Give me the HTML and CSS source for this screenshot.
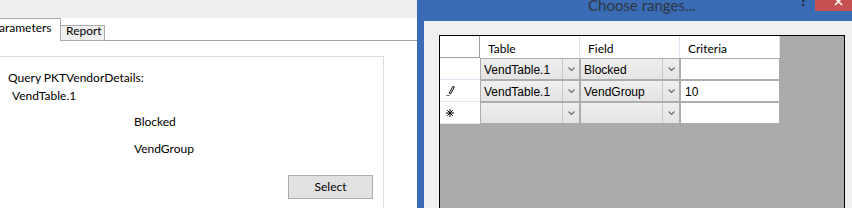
FILE: index.html
```html
<!DOCTYPE html>
<html>
<head>
<meta charset="utf-8">
<link rel="stylesheet" href="styles.css">
</head>
<body>
<div class="screen">
  <div class="left">
    <div class="topband"></div>
    <div class="tabstrip">
      <div class="tab tab-sel">Parameters</div>
      <div class="tab tab-off">Report</div>
      <div class="tabfill"></div>
    </div>
    <div class="page">
      <div class="group">
        <div class="q">Query PKTVendorDetails:</div>
        <div class="tbl">VendTable.1</div>
        <div class="fld fld-first">Blocked</div>
        <div class="fld">VendGroup</div>
        <div class="btnrow"><div class="btn">Select</div></div>
      </div>
    </div>
  </div>
  <div class="win">
    <div class="titlebar">
      <div class="title">Choose ranges...</div>
      <div class="help">?</div>
      <div class="close">
        <svg width="37" height="11" viewBox="0 0 37 11"><path d="M20 -2 L27 5 M27 -2 L20 5" stroke="#fff" stroke-width="1.6" fill="none"/></svg>
      </div>
    </div>
    <div class="client">
      <div class="grid">
        <div class="rows">
          <div class="corner"></div>
          <div class="hcell">Table</div>
          <div class="hcell">Field</div>
          <div class="hcell">Criteria</div>

          <div class="rh"></div>
          <div class="combo"><span class="txt">VendTable.1</span><span class="dd"><svg width="7" height="4" viewBox="0 0 7 4"><path d="M0.5 0.5 L3.5 3.5 L6.5 0.5" stroke="#707070" stroke-width="1.2" fill="none"/></svg></span></div>
          <div class="combo"><span class="txt">Blocked</span><span class="dd"><svg width="7" height="4" viewBox="0 0 7 4"><path d="M0.5 0.5 L3.5 3.5 L6.5 0.5" stroke="#707070" stroke-width="1.2" fill="none"/></svg></span></div>
          <div class="crit"></div>

          <div class="rh"><svg width="9" height="11" viewBox="0 0 9 11"><path d="M3.2 8.2 L7 1.2 L8.3 2 L4.5 9 Z" stroke="#000" stroke-width="0.9" fill="none"/><path d="M0.5 10.5 h1 M2.3 10.5 h1" stroke="#000" stroke-width="1"/></svg></div>
          <div class="combo"><span class="txt">VendTable.1</span><span class="dd"><svg width="7" height="4" viewBox="0 0 7 4"><path d="M0.5 0.5 L3.5 3.5 L6.5 0.5" stroke="#707070" stroke-width="1.2" fill="none"/></svg></span></div>
          <div class="combo"><span class="txt">VendGroup</span><span class="dd"><svg width="7" height="4" viewBox="0 0 7 4"><path d="M0.5 0.5 L3.5 3.5 L6.5 0.5" stroke="#707070" stroke-width="1.2" fill="none"/></svg></span></div>
          <div class="crit">10</div>

          <div class="rh"><svg width="8" height="8" viewBox="0 0 8 8"><path d="M4 0 V8 M0 4 H8 M1.2 1.2 L6.8 6.8 M6.8 1.2 L1.2 6.8" stroke="#000" stroke-width="1" fill="none"/></svg></div>
          <div class="combo"><span class="txt"></span><span class="dd"><svg width="7" height="4" viewBox="0 0 7 4"><path d="M0.5 0.5 L3.5 3.5 L6.5 0.5" stroke="#707070" stroke-width="1.2" fill="none"/></svg></span></div>
          <div class="combo"><span class="txt"></span><span class="dd"><svg width="7" height="4" viewBox="0 0 7 4"><path d="M0.5 0.5 L3.5 3.5 L6.5 0.5" stroke="#707070" stroke-width="1.2" fill="none"/></svg></span></div>
          <div class="crit"></div>
        </div>
      </div>
    </div>
  </div>
</div>
</body>
</html>
```
FILE: styles.css
```css
html, body {
  margin: 0;
  padding: 0;
}
body {
  width: 852px;
  height: 208px;
  overflow: hidden;
  background: #fff;
  color: #000;
  font-family: Lato, "Liberation Sans", sans-serif;
  font-size: 12px;
}
.screen {
  display: flex;
  height: 208px;
}
.left {
  width: 417px;
  flex: none;
  overflow: hidden;
  display: flex;
  flex-direction: column;
  background: #fff;
}
.topband {
  height: 18px;
  background: #eeeeee;
  flex: none;
}
.tabstrip {
  display: flex;
  align-items: flex-end;
  height: 23px;
  flex: none;
}
.tab {
  box-sizing: border-box;
  white-space: nowrap;
  flex: none;
}
.tab-sel {
  margin-left: -12px;
  width: 73px;
  height: 23px;
  border-top: 1px solid #acacac;
  border-right: 1px solid #acacac;
  background: #fff;
  padding: 1px 0 0 4px;
  line-height: 16px;
}
.tab-off {
  margin-left: -1px;
  width: 45px;
  height: 16px;
  border: 1px solid #acacac;
  background: #efefef;
  padding-left: 5px;
  line-height: 9px;
}
.tabfill {
  flex: 1;
  height: 23px;
  box-sizing: border-box;
  border-bottom: 1px solid #a0a0a0;
}
.page {
  flex: 1;
  padding-top: 15px;
  display: flex;
}
.group {
  width: 384px;
  box-sizing: border-box;
  border-top: 1px solid #dcdcdc;
  border-right: 1px solid #dcdcdc;
  padding-top: 13px;
  line-height: 16px;
}
.q {
  margin-left: 8px;
}
.tbl {
  margin-left: 12px;
  margin-top: 2px;
}
.fld {
  margin-left: 134px;
  margin-top: 11px;
}
.fld-first {
  margin-top: 10px;
}
.btnrow {
  margin-top: 18px;
  padding-left: 288px;
}
.btn {
  width: 85px;
  height: 24px;
  box-sizing: border-box;
  border: 1px solid #adadad;
  background: #e1e1e1;
  text-align: center;
  line-height: 21px;
}
.win {
  flex: 1;
  background: #3a6bb5;
  display: flex;
  flex-direction: column;
  padding-left: 7px;
  overflow: hidden;
}
.titlebar {
  height: 21px;
  flex: none;
  display: flex;
  align-items: flex-start;
  overflow: hidden;
}
.title {
  margin-left: 164px;
  margin-top: -2px;
  font-size: 15px;
  line-height: 15px;
  color: #2f3640;
  white-space: nowrap;
}
.help {
  margin-left: auto;
  margin-top: -7px;
  width: 6px;
  margin-right: 9px;
  font-size: 15px;
  line-height: 15px;
  font-weight: bold;
  color: #1f2530;
}
.close {
  width: 37px;
  height: 11px;
  background: #c75050;
  flex: none;
}
.close svg {
  display: block;
  overflow: visible;
}
.client {
  flex: 1;
  background: #f0f0f0;
  padding: 14px 0 0 15px;
  display: flex;
}
.grid {
  width: 406px;
  box-sizing: border-box;
  border: 1px solid #000;
  border-bottom: none;
  background: #ababab;
}
.rows {
  display: grid;
  grid-template-columns: 40px 100px 100px 100px;
  grid-auto-rows: 22px;
}
.corner {
  background: #fff;
  border-right: 1px solid #a0a0a0;
  border-bottom: 1px solid #a0a0a0;
  box-sizing: border-box;
}
.hcell {
  background: #fff;
  border-right: 1px solid #dde6f3;
  box-sizing: border-box;
  padding: 4px 0 0 8px;
  line-height: 18px;
}
.rh {
  background: #fff;
  border-bottom: 1px solid #dde6f3;
  box-sizing: border-box;
  display: flex;
  align-items: center;
  padding-left: 6px;
}
.combo {
  display: flex;
  box-sizing: border-box;
  border: 1px solid #adadad;
  background: linear-gradient(#efefef, #e4e4e4);
}
.combo .txt {
  flex: 1;
  padding: 2px 0 0 3px;
  font-family: "Liberation Sans", Arial, sans-serif;
  font-size: 12px;
  line-height: 18px;
  white-space: nowrap;
  overflow: hidden;
}
.combo .dd {
  width: 16px;
  flex: none;
  border-left: 1px solid #c8c8c8;
  display: flex;
  align-items: center;
  justify-content: center;
}
.combo .dd svg {
  display: block;
}
.crit {
  background: #fff;
  box-sizing: border-box;
  border: 1px solid #adadad;
  padding: 2px 0 0 4px;
  font-family: "Liberation Sans", Arial, sans-serif;
  font-size: 12px;
  line-height: 18px;
}
```
